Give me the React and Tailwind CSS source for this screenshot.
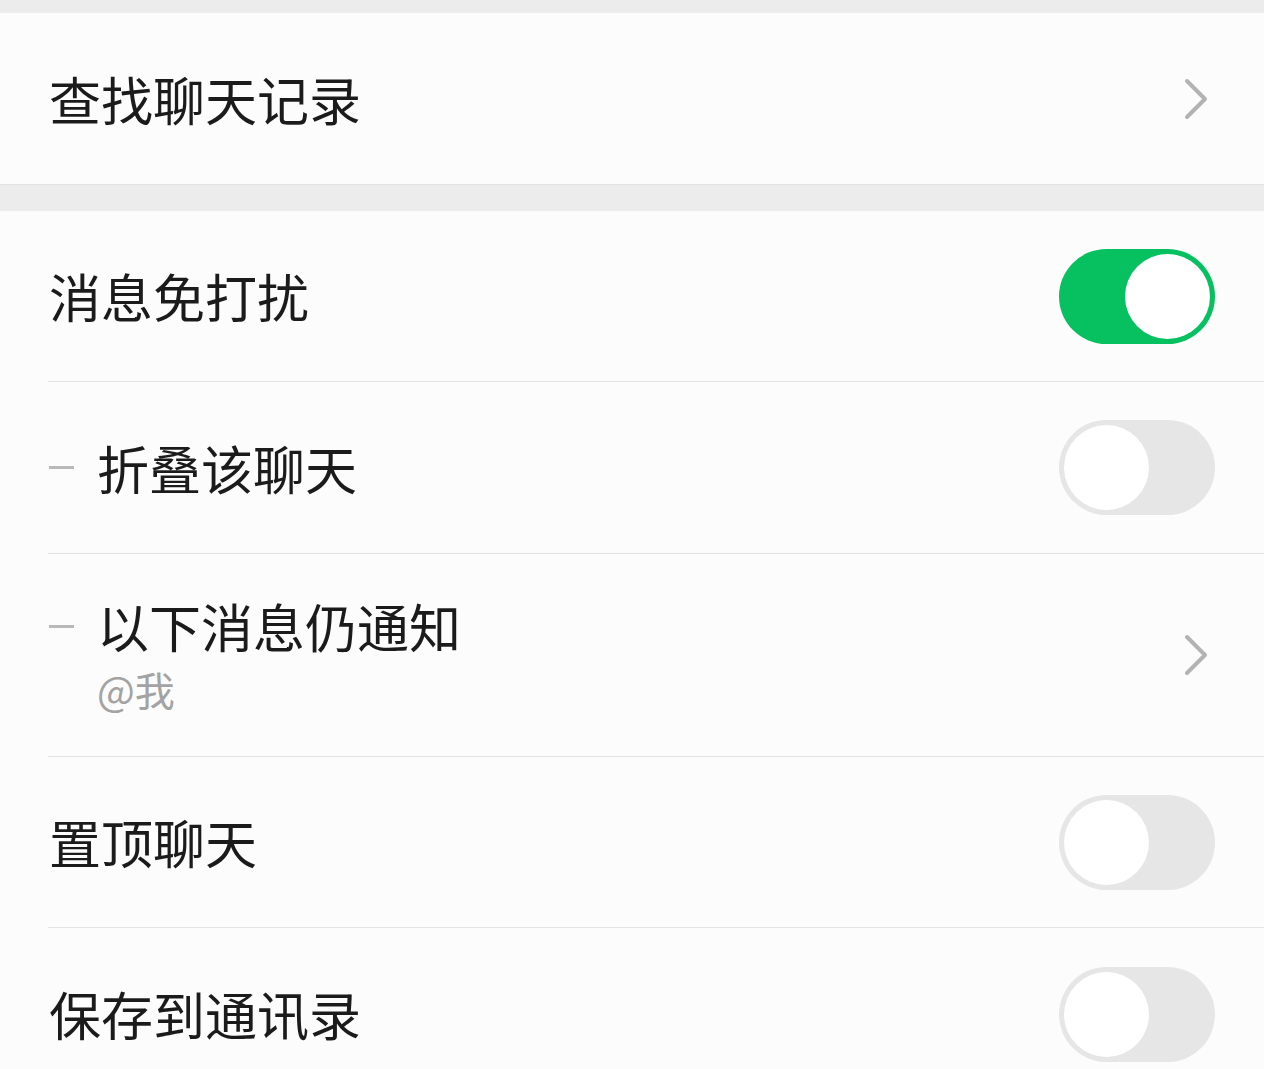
import React from 'react';

const Chevron = () => (
  <svg width="26" height="42" viewBox="0 0 26 42" fill="none" className="shrink-0">
    <polyline points="4,3 22,21 4,39" stroke="#b3b3b3" strokeWidth="4" strokeLinecap="round" strokeLinejoin="round" />
  </svg>
);

const Toggle = ({ on }) => (
  <div
    className={`flex h-[95px] w-[156px] shrink-0 rounded-full p-[5px] ${
      on ? 'justify-end bg-[#07c160]' : 'justify-start bg-[#e6e6e6]'
    }`}
  >
    <div className="h-[85px] w-[85px] rounded-full bg-white" />
  </div>
);

const Dash = () => <div className="mr-[23px] h-[3px] w-[25px] shrink-0 bg-[#b9b9b9]" />;

const Row = ({ title, sub, indent, right, last, height = 'h-[172px]' }) => (
  <div className={`ml-[48px] flex items-center justify-between pr-[49px] ${height} ${last ? '' : 'border-b border-[#e4e4e4]'}`}>
    <div className="flex flex-col">
      <div className="flex items-center pl-[1px]">
        {indent && <Dash />}
        <span className="text-[52px] leading-[60px] text-[#1b1b1b]">{title}</span>
      </div>
      {sub && <span className="mt-[8px] pl-[49px] text-[40px] leading-[50px] text-[#a3a3a3]">{sub}</span>}
    </div>
    {right}
  </div>
);

export default function App() {
  return (
    <div
      className="min-h-screen bg-[#fcfcfc]"
      style={{ fontFamily: '"Noto Sans CJK SC", "Noto Sans", sans-serif' }}
    >
      <div className="h-[13px] bg-[#ececec]" />
      <div className="flex h-[172px] items-center justify-between border-b border-[#e2e2e2] pl-[49px] pr-[55px]">
        <span className="text-[52px] leading-[64px] text-[#1b1b1b]">查找聊天记录</span>
        <Chevron />
      </div>
      <div className="h-[26px] bg-[#ececec]" />
      <div>
        <Row title="消息免打扰" height="h-[171px]" right={<Toggle on />} />
        <Row title="折叠该聊天" indent right={<Toggle />} />
        <Row title="以下消息仍通知" sub="@我" indent height="h-[203px]" right={<div className="pr-[6px]"><Chevron /></div>} />
        <Row title="置顶聊天" height="h-[171px]" right={<Toggle />} />
        <Row title="保存到通讯录" last right={<Toggle />} />
      </div>
    </div>
  );
}
